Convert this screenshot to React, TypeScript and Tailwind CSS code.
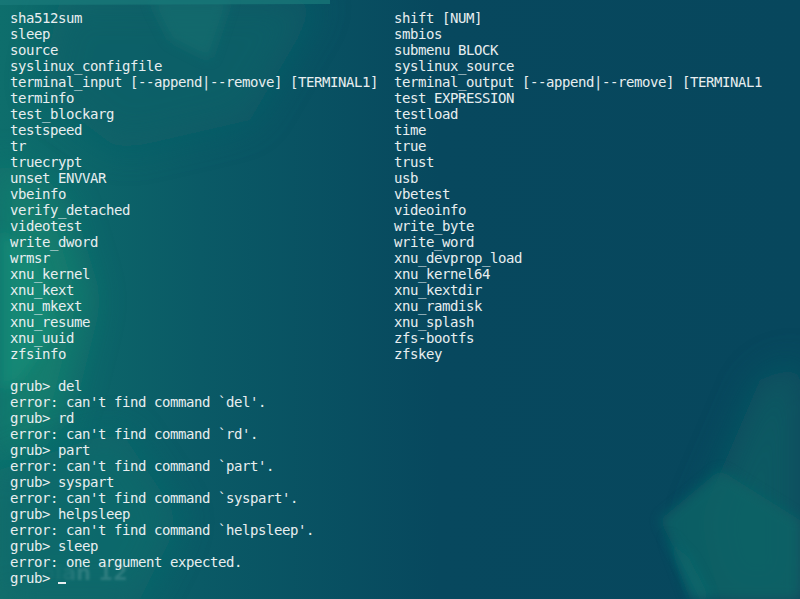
import React from "react";

const left = [
  "sha512sum",
  "sleep",
  "source",
  "syslinux_configfile",
  "terminal_input [--append|--remove] [TERMINAL1]",
  "terminfo",
  "test_blockarg",
  "testspeed",
  "tr",
  "truecrypt",
  "unset ENVVAR",
  "vbeinfo",
  "verify_detached",
  "videotest",
  "write_dword",
  "wrmsr",
  "xnu_kernel",
  "xnu_kext",
  "xnu_mkext",
  "xnu_resume",
  "xnu_uuid",
  "zfsinfo",
];

const right = [
  "shift [NUM]",
  "smbios",
  "submenu BLOCK",
  "syslinux_source",
  "terminal_output [--append|--remove] [TERMINAL1",
  "test EXPRESSION",
  "testload",
  "time",
  "true",
  "trust",
  "usb",
  "vbetest",
  "videoinfo",
  "write_byte",
  "write_word",
  "xnu_devprop_load",
  "xnu_kernel64",
  "xnu_kextdir",
  "xnu_ramdisk",
  "xnu_splash",
  "zfs-bootfs",
  "zfskey",
];

const session = [
  "grub> del",
  "error: can't find command `del'.",
  "grub> rd",
  "error: can't find command `rd'.",
  "grub> part",
  "error: can't find command `part'.",
  "grub> syspart",
  "error: can't find command `syspart'.",
  "grub> helpsleep",
  "error: can't find command `helpsleep'.",
  "grub> sleep",
  "error: one argument expected.",
];

function Wallpaper() {
  return (
    <svg
      className="absolute inset-0 h-full w-full"
      viewBox="0 0 800 599"
      preserveAspectRatio="none"
    >
      <defs>
        <filter id="b1" x="-50%" y="-50%" width="200%" height="200%">
          <feGaussianBlur stdDeviation="18" />
        </filter>
        <filter id="b2" x="-50%" y="-50%" width="200%" height="200%">
          <feGaussianBlur stdDeviation="6" />
        </filter>
        <filter id="b3" x="-50%" y="-50%" width="200%" height="200%">
          <feGaussianBlur stdDeviation="1.2" />
        </filter>
        <linearGradient id="lg" x1="0" y1="0" x2="1" y2="0">
          <stop offset="0" stopColor="#0e6e6c" />
          <stop offset="0.25" stopColor="#0a5a66" />
          <stop offset="0.55" stopColor="#07485e" />
          <stop offset="1" stopColor="#07475d" />
        </linearGradient>
        <linearGradient id="wm" x1="0" y1="0" x2="1" y2="0">
          <stop offset="0" stopColor="#ffffff" stopOpacity="0" />
          <stop offset="0.45" stopColor="#ffffff" stopOpacity="0.03" />
          <stop offset="0.6" stopColor="#ffffff" stopOpacity="0.13" />
          <stop offset="1" stopColor="#ffffff" stopOpacity="0.13" />
        </linearGradient>
      </defs>
      <rect width="800" height="599" fill="url(#lg)" />
      <polygon points="60,0 320,0 250,120 120,150 40,90" fill="#0e6068" filter="url(#b1)" opacity="0.8" />
      <polygon points="150,0 230,0 210,60 170,40" fill="#127070" filter="url(#b2)" opacity="0.6" />
      <polygon points="0,0 330,0 330,4 0,5" fill="#1a7a7a" opacity="0.7" />
      <polygon points="0,160 60,200 90,300 60,420 0,470" fill="#12826f" filter="url(#b1)" opacity="0.85" />
      <polygon points="0,230 40,260 55,330 20,380 0,390" fill="#16907a" filter="url(#b2)" opacity="0.6" />
      <polygon points="0,470 120,430 180,520 140,599 0,599" fill="#0e6a6c" filter="url(#b1)" opacity="0.8" />
      <polygon points="760,380 800,360 800,599 720,599 700,520" fill="#0b5c64" filter="url(#b1)" opacity="0.9" />
      <polygon points="660,520 720,470 800,520 800,599 700,599" fill="#0c6466" filter="url(#b2)" opacity="0.8" />
      <polygon points="666,534 690,560 710,599 690,599" fill="#107070" filter="url(#b2)" opacity="0.6" />
      <text
        x="8"
        y="580"
        fill="url(#wm)"
        filter="url(#b3)"
        fontFamily="DejaVu Sans, sans-serif"
        fontWeight="bold"
        fontSize="21"
      >
        Debian 12
      </text>
    </svg>
  );
}

function Line({ text }: { text: string }) {
  return <div className="h-4 whitespace-pre leading-4">{text || "\u00a0"}</div>;
}

export default function App() {
  return (
    <div className="relative h-[599px] w-[800px] overflow-hidden bg-[#07475d]">
      <Wallpaper />
      <div className="relative pl-[10px] pt-[10px] font-['DejaVu_Sans_Mono',monospace] text-[14px] tracking-[-0.43px] text-[#e8eef0]">
        <div className="grid grid-cols-[384px_1fr]">
          <div>
            {left.map((t, i) => (
              <Line key={i} text={t} />
            ))}
          </div>
          <div>
            {right.map((t, i) => (
              <Line key={i} text={t} />
            ))}
          </div>
        </div>
        <Line text="" />
        {session.map((t, i) => (
          <Line key={i} text={t} />
        ))}
        <div className="flex h-4 items-start leading-4 whitespace-pre">
          <span>grub&gt; </span>
          <span className="mt-[12px] h-[2px] w-2 bg-[#e8eef0]" />
        </div>
      </div>
    </div>
  );
}
